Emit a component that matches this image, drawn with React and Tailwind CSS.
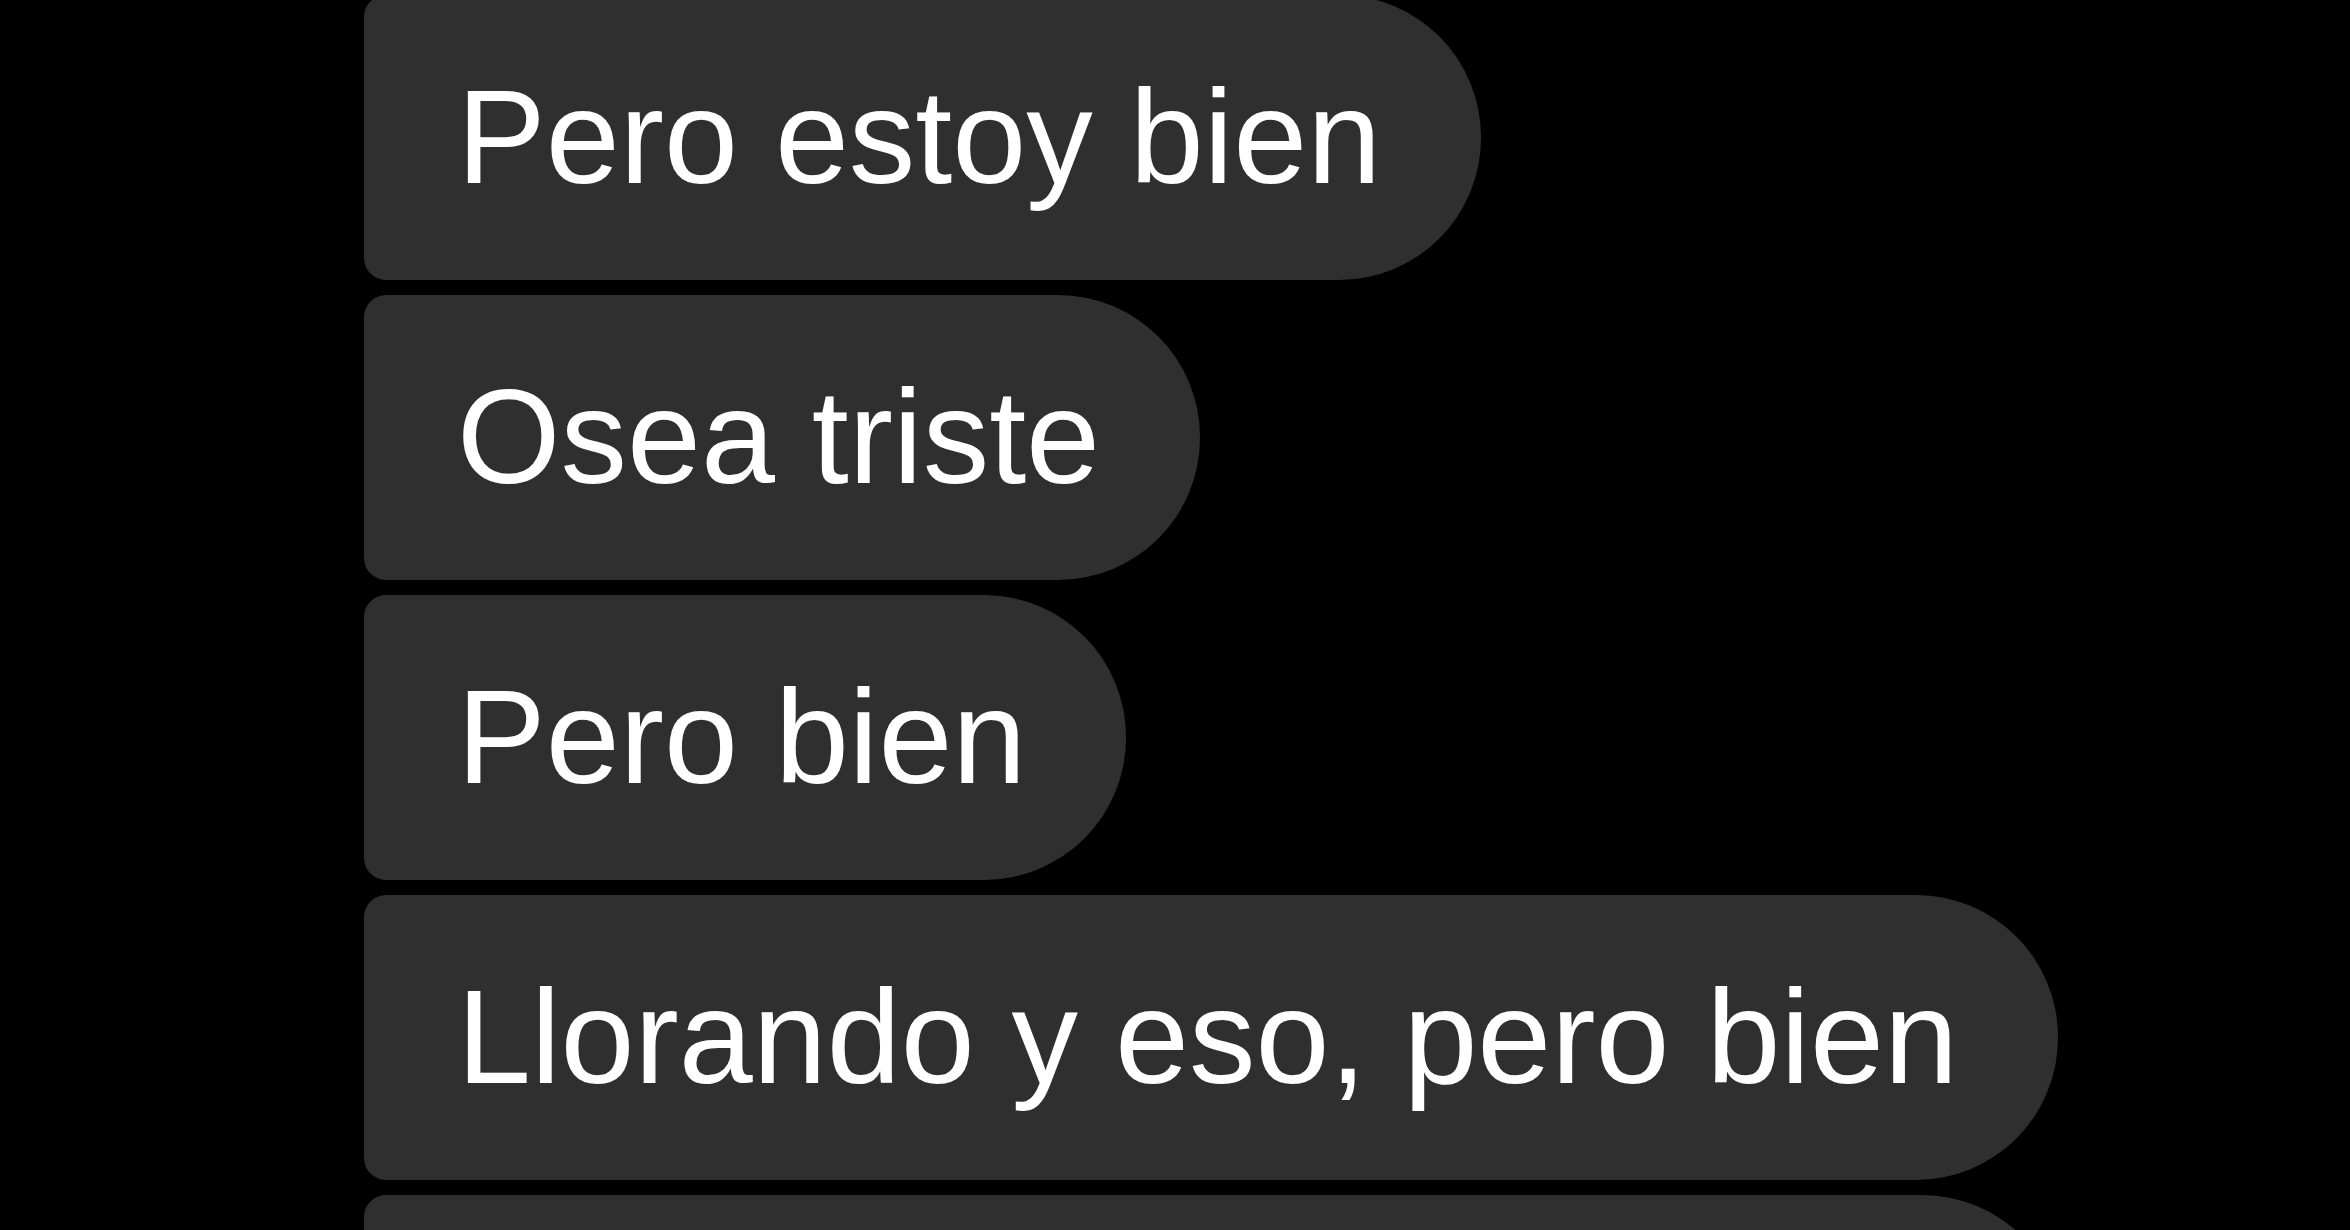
export default function App() {
  const msgs = [
    { t: "Pero estoy bien" },
    { t: "Osea triste" },
    { t: "Pero bien" },
    { t: "Llorando y eso, pero bien" },
  ];
  return (
    <div className="w-[2350px] h-[1230px] bg-black overflow-hidden">
      <div className="flex flex-col items-start gap-[15px] pl-[364px] mt-[-5px]">
        {msgs.map((m, i) => (
          <div
            key={i}
            className="h-[285px] flex items-center bg-[#2f2f2f] rounded-l-[22px] rounded-r-[142px] pl-[93px] pr-[100px]"
          >
            <span
              className="text-white text-[133px] leading-none whitespace-nowrap"
              style={{ fontFamily: '"Liberation Sans", Arial, sans-serif' }}
            >
              {m.t}
            </span>
          </div>
        ))}
        <div className="h-[285px] w-[1700px] bg-[#2f2f2f] rounded-l-[22px] rounded-r-[142px]" />
      </div>
    </div>
  );
}
